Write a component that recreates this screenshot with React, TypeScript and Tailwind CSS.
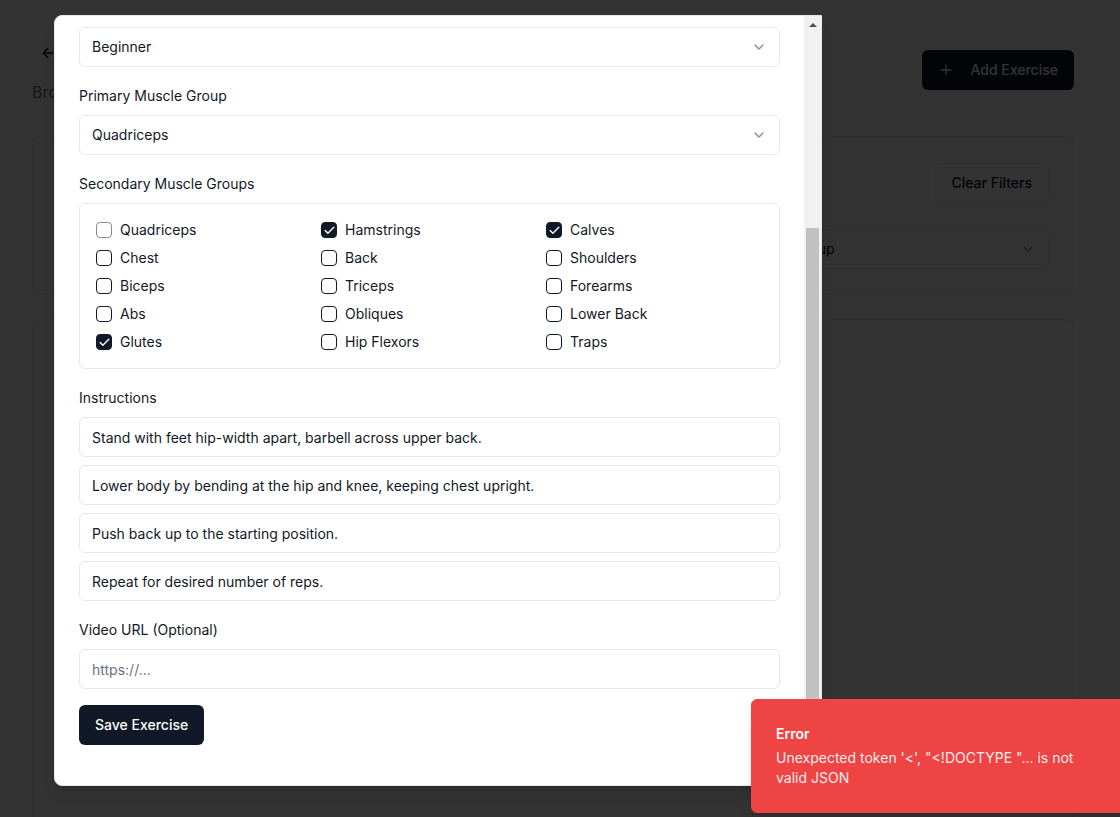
import { useLayoutEffect, useRef, type ReactNode } from 'react';
import { ArrowLeft, Check, ChevronDown, Plus } from 'lucide-react';

const muscles: { name: string; checked?: boolean; disabled?: boolean }[] = [
  { name: 'Quadriceps', disabled: true },
  { name: 'Hamstrings', checked: true },
  { name: 'Calves', checked: true },
  { name: 'Chest' },
  { name: 'Back' },
  { name: 'Shoulders' },
  { name: 'Biceps' },
  { name: 'Triceps' },
  { name: 'Forearms' },
  { name: 'Abs' },
  { name: 'Obliques' },
  { name: 'Lower Back' },
  { name: 'Glutes', checked: true },
  { name: 'Hip Flexors' },
  { name: 'Traps' },
];

const steps = [
  'Stand with feet hip-width apart, barbell across upper back.',
  'Lower body by bending at the hip and knee, keeping chest upright.',
  'Push back up to the starting position.',
  'Repeat for desired number of reps.',
];

function Field({
  label,
  children,
  gap = 'mt-[9px]',
}: {
  label: string;
  children: ReactNode;
  gap?: string;
}) {
  return (
    <div>
      <label className="block text-sm leading-5 text-[#111827]">{label}</label>
      <div className={gap}>{children}</div>
    </div>
  );
}

function Select({ value }: { value: string }) {
  return (
    <div className="flex h-10 items-center justify-between rounded-md border border-[#e5e7eb] bg-white px-3 text-sm text-[#111827]">
      <span>{value}</span>
      <ChevronDown className="size-4 opacity-50" />
    </div>
  );
}

function TextInput({ value, placeholder }: { value?: string; placeholder?: string }) {
  return (
    <input
      readOnly
      defaultValue={value}
      placeholder={placeholder}
      className="block h-10 w-full rounded-md border border-[#e5e7eb] bg-white px-3 text-sm text-[#111827] outline-none placeholder:text-[#6b7280]"
    />
  );
}

export default function App() {
  const scroller = useRef<HTMLDivElement>(null);

  useLayoutEffect(() => {
    if (scroller.current) scroller.current.scrollTop = scroller.current.scrollHeight;
  }, []);

  return (
    <div className="relative h-screen w-screen overflow-hidden bg-white font-['Inter',sans-serif]">
      {/* page behind the dialog */}
      <div className="pt-[35px] pr-[46px] pl-8">
        <div className="flex items-start justify-between">
          <div>
            <div className="flex items-center gap-4">
              <span className="grid size-8 place-items-center rounded-md text-[#111827]">
                <ArrowLeft className="size-4" />
              </span>
              <h1 className="text-3xl leading-9 font-bold text-[#111827]">
                Exercise Library
              </h1>
            </div>
            <p className="mt-[9px] text-base text-[#6b7280]">
              Browse and manage your exercise database
            </p>
          </div>
          <button className="mt-[15px] flex h-10 items-center gap-4 rounded-md bg-[#111827] px-4 text-sm font-medium text-white">
            <Plus className="size-4" />
            Add Exercise
          </button>
        </div>

        <div className="mt-8 rounded-lg border border-[#e5e7eb] px-6 pt-[26px] pb-6">
          <div className="flex h-10 items-center justify-between">
            <h2 className="text-lg font-semibold text-[#111827]">Filters</h2>
            <button className="h-10 rounded-md border border-[#e5e7eb] px-4 text-sm font-medium text-[#111827]">
              Clear Filters
            </button>
          </div>
          <div className="mt-[26px] grid grid-cols-3 gap-4">
            <TextInput placeholder="Search exercises..." />
            <Select value="Category" />
            <Select value="Muscle Group" />
          </div>
        </div>

        <div className="mt-[25px] h-[600px] rounded-lg border border-[#e5e7eb]" />
      </div>

      <div className="absolute inset-0 bg-black/80" />

      {/* dialog */}
      <div className="absolute top-[15px] left-[54px] flex h-[771px] w-[768px] overflow-hidden rounded-l-lg border border-[#e5e7eb] bg-white shadow-lg">
        <div ref={scroller} className="flex-1 overflow-hidden">
          <div className="px-6 pt-6 pb-10">
            <h2 className="text-lg font-semibold text-[#111827]">Add New Exercise</h2>
            <p className="mt-1.5 text-sm text-[#6b7280]">
              Create a new exercise for your library.
            </p>

            <div className="mt-4 flex flex-col gap-[19px]">
              <Field label="Exercise Name">
                <TextInput value="Barbell Back Squat" />
              </Field>
              <Field label="Category">
                <Select value="Strength" />
              </Field>
              <Field label="Difficulty Level" gap="mt-[14px]">
                <Select value="Beginner" />
              </Field>
              <Field label="Primary Muscle Group">
                <Select value="Quadriceps" />
              </Field>
              <Field label="Secondary Muscle Groups">
                <div className="grid grid-cols-3 gap-2 rounded-md border border-[#e5e7eb] p-4">
                  {muscles.map(m => (
                    <div key={m.name} className="flex h-5 items-center gap-2">
                      <span
                        className={`grid size-4 shrink-0 place-items-center rounded-[4px] border border-[#111827] ${
                          m.checked ? 'bg-[#111827] text-white' : ''
                        } ${m.disabled ? 'opacity-50' : ''}`}
                      >
                        {m.checked && <Check className="size-[13px]" strokeWidth={2.5} />}
                      </span>
                      <span className="text-sm text-[#111827]">{m.name}</span>
                    </div>
                  ))}
                </div>
              </Field>
              <Field label="Instructions">
                <div className="flex flex-col gap-2">
                  {steps.map(s => (
                    <TextInput key={s} value={s} />
                  ))}
                </div>
              </Field>
              <Field label="Video URL (Optional)">
                <TextInput placeholder="https://..." />
              </Field>
            </div>

            <button className="mt-4 h-10 rounded-md bg-[#111827] px-4 text-sm font-medium text-white">
              Save Exercise
            </button>
          </div>
        </div>

        {/* scrollbar */}
        <div className="flex w-[17px] shrink-0 flex-col bg-[#f1f1f1]">
          <div className="flex h-[17px] items-center justify-center">
            <svg width="8" height="4" viewBox="0 0 8 4">
              <path d="M0 4 4 0 8 4z" fill="#505050" />
            </svg>
          </div>
          <div className="flex flex-1 flex-col px-[2px] pt-[195px]">
            <div className="flex-1 bg-[#c1c1c1]" />
          </div>
          <div className="flex h-[17px] items-center justify-center">
            <svg width="8" height="4" viewBox="0 0 8 4">
              <path d="M0 0 4 4 8 0z" fill="#505050" />
            </svg>
          </div>
        </div>
      </div>

      {/* toast */}
      <div className="absolute top-[699px] left-[751px] w-[388px] rounded-md border border-[#ef4444] bg-[#ef4444] p-6 pr-8 text-white shadow-lg">
        <div className="grid gap-1">
          <div className="text-sm font-semibold">Error</div>
          <div className="text-sm opacity-90">
            {`Unexpected token '<', "<!DOCTYPE "... is not valid JSON`}
          </div>
        </div>
      </div>
    </div>
  );
}
